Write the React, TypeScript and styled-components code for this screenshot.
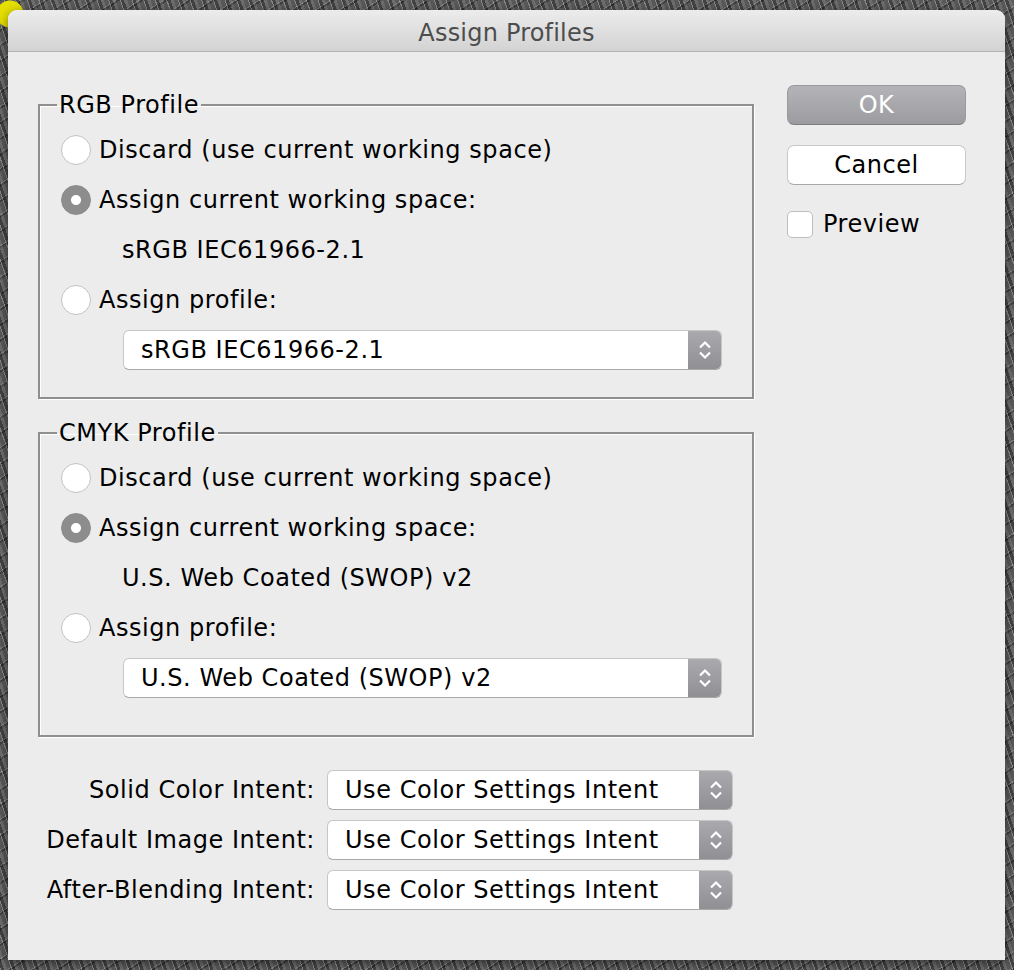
import React from 'react';
import styled, { createGlobalStyle } from 'styled-components';

const GlobalStyle = createGlobalStyle`
  html, body {
    margin: 0;
    padding: 0;
  }
  body {
    font-family: 'DejaVu Sans', 'Liberation Sans', sans-serif;
    background-color: #5a5a5a;
    background-image:
      radial-gradient(circle at 10px 14px, #e6e000 0 13px, transparent 14px),
      repeating-linear-gradient(71deg, rgba(255,255,255,0.28) 0 1px, rgba(0,0,0,0.25) 1px 4px, rgba(255,255,255,0.12) 4px 7px, transparent 7px 11px),
      repeating-linear-gradient(-33deg, rgba(0,0,0,0.3) 0 2px, rgba(255,255,255,0.18) 2px 3px, transparent 3px 13px);
  }
`;

const intents = ['Solid Color Intent:', 'Default Image Intent:', 'After-Blending Intent:'];

const Chevrons: React.FC = () => (
  <svg width="16" height="26" viewBox="0 0 16 26" fill="none">
    <path d="M3 10.5 L8 5.5 L13 10.5" stroke="#fff" strokeWidth="2.2" />
    <path d="M3 15.5 L8 20.5 L13 15.5" stroke="#fff" strokeWidth="2.2" />
  </svg>
);

const PopUp: React.FC<{ value: string; width: number }> = ({ value, width }) => (
  <Select style={{ width }}>
    <SelectValue>{value}</SelectValue>
    <Stepper>
      <Chevrons />
    </Stepper>
  </Select>
);

type GroupProps = {
  title: string;
  current: string;
  padBottom: number;
};

const ProfileGroup: React.FC<GroupProps> = ({ title, current, padBottom }) => (
  <Group $padBottom={padBottom}>
    <Legend>{title}</Legend>
    <OptionRow>
      <Radio />
      Discard (use current working space)
    </OptionRow>
    <OptionRow>
      <Radio $checked />
      Assign current working space:
    </OptionRow>
    <OptionRow $indent>{current}</OptionRow>
    <OptionRow>
      <Radio />
      Assign profile:
    </OptionRow>
    <DropRow>
      <PopUp value={current} width={599} />
    </DropRow>
  </Group>
);

const App: React.FC = () => {
  return (
    <Page>
      <GlobalStyle />
      <Window>
        <TitleBar>Assign Profiles</TitleBar>
        <Content>
          <LeftColumn>
            <ProfileGroup title="RGB Profile" current="sRGB IEC61966-2.1" padBottom={27} />
            <ProfileGroup title="CMYK Profile" current="U.S. Web Coated (SWOP) v2" padBottom={37} />
            <IntentGrid>
              {intents.map((label) => (
                <React.Fragment key={label}>
                  <IntentLabel>{label}</IntentLabel>
                  <PopUp value="Use Color Settings Intent" width={406} />
                </React.Fragment>
              ))}
            </IntentGrid>
          </LeftColumn>
          <RightColumn>
            <Button $primary>OK</Button>
            <Button>Cancel</Button>
            <CheckRow>
              <CheckBox />
              Preview
            </CheckRow>
          </RightColumn>
        </Content>
      </Window>
    </Page>
  );
};

// Styled components
const Page = styled.div`
  padding: 10px 9px 10px 8px;
  height: 970px;
  box-sizing: border-box;
`;

const Window = styled.div`
  width: 997px;
  height: 950px;
  background: #ececec;
  border-radius: 9px 9px 0 0;
  box-shadow: 0 3px 12px rgba(0, 0, 0, 0.5);
  overflow: hidden;
  display: flex;
  flex-direction: column;
  color: #000;
  font-size: 24px;
  letter-spacing: 0.55px;
`;

const TitleBar = styled.div`
  height: 42px;
  box-sizing: border-box;
  padding-top: 4px;
  flex-shrink: 0;
  display: flex;
  align-items: center;
  justify-content: center;
  background: linear-gradient(#ececec, #d3d3d3);
  border-bottom: 1px solid #b3b3b3;
  color: #4d4d4d;
  letter-spacing: 0.2px;
`;

const Content = styled.div`
  display: flex;
  gap: 33px;
  padding: 33px 0 0 30px;
`;

const LeftColumn = styled.div`
  width: 716px;
  padding-top: 6px;
  display: flex;
  flex-direction: column;
  gap: 20px;
`;

const Group = styled.fieldset<{ $padBottom: number }>`
  margin: 0;
  min-width: 0;
  padding: 6px 0 ${(p) => p.$padBottom}px 21px;
  border: 2px solid #8f8f8f;
  box-shadow: 1px 1px 0 #fff, inset 1px 1px 0 #fff;
`;

const Legend = styled.legend`
  padding: 0 2px;
  margin-left: -4px;
  line-height: 28px;
`;

const OptionRow = styled.div<{ $indent?: boolean }>`
  height: 50px;
  display: flex;
  align-items: center;
  gap: 8px;
  padding-left: ${(p) => (p.$indent ? '61px' : '0')};
`;

const Radio = styled.span<{ $checked?: boolean }>`
  width: 30px;
  height: 30px;
  box-sizing: border-box;
  border-radius: 50%;
  flex-shrink: 0;
  background: ${(p) =>
    p.$checked
      ? 'radial-gradient(circle, #fff 0 4.5px, #8d8d8d 5.5px)'
      : '#fff'};
  border: 1px solid ${(p) => (p.$checked ? '#8a8a8a' : '#c2c2c2')};
`;

const DropRow = styled.div`
  margin-top: 5px;
  padding-left: 62px;
`;

const Select = styled.div`
  height: 40px;
  box-sizing: border-box;
  display: flex;
  background: #fff;
  border: 1px solid #c6c6c6;
  border-bottom-color: #a9a9a9;
  border-radius: 6px;
  overflow: hidden;
`;

const SelectValue = styled.div`
  flex: 1;
  display: flex;
  align-items: center;
  padding-left: 17px;
  white-space: nowrap;
`;

const Stepper = styled.div`
  width: 33px;
  display: flex;
  align-items: center;
  justify-content: center;
  background: linear-gradient(#a9a9ae, #8f8f94);
`;

const IntentGrid = styled.div`
  margin-top: 13px;
  display: grid;
  grid-template-columns: 277px 406px;
  column-gap: 12px;
  row-gap: 10px;
  align-items: center;
`;

const IntentLabel = styled.div`
  text-align: right;
  white-space: nowrap;
  direction: rtl;
  unicode-bidi: plaintext;
`;

const RightColumn = styled.div`
  width: 179px;
  display: flex;
  flex-direction: column;
  gap: 20px;
`;

const Button = styled.div<{ $primary?: boolean }>`
  height: 40px;
  box-sizing: border-box;
  display: flex;
  align-items: center;
  justify-content: center;
  border-radius: 7px;
  color: ${(p) => (p.$primary ? '#fff' : '#000')};
  background: ${(p) => (p.$primary ? 'linear-gradient(#b4b4b8, #9c9ca0)' : '#fff')};
  border: 1px solid ${(p) => (p.$primary ? '#9a9a9e' : '#c8c8c8')};
  border-bottom-color: ${(p) => (p.$primary ? '#7e7e82' : '#a8a8a8')};
`;

const CheckRow = styled.div`
  margin-top: 5px;
  display: flex;
  align-items: center;
  gap: 10px;
`;

const CheckBox = styled.span`
  width: 26px;
  height: 27px;
  box-sizing: border-box;
  background: #fff;
  border: 1px solid #bdbdbd;
  border-radius: 5px;
`;

export default App;
